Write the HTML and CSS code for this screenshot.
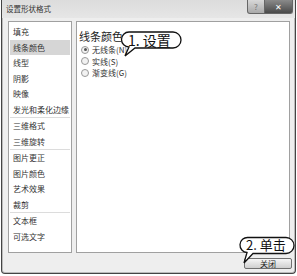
FILE: index.html
```html
<!DOCTYPE html>
<html lang="zh-CN">
<head>
    <meta charset="UTF-8">
    <title>设置形状格式</title>
    <link rel="stylesheet" href="styles.css">
</head>
<body>
    <div class="window">
        <div class="titlebar">
            <span class="title">设置形状格式</span>
            <div class="controls">
                <span class="btn-help">?</span>
                <span class="btn-close">✕</span>
            </div>
        </div>

        <div class="content">
            <ul class="nav">
                <li>填充</li>
                <li class="active">线条颜色</li>
                <li>线型</li>
                <li>阴影</li>
                <li>映像</li>
                <li>发光和柔化边缘</li>
                <li class="sep">三维格式</li>
                <li>三维旋转</li>
                <li class="sep">图片更正</li>
                <li>图片颜色</li>
                <li>艺术效果</li>
                <li>裁剪</li>
                <li class="sep">文本框</li>
                <li>可选文字</li>
            </ul>

            <div class="pane">
                <div class="pane-title">线条颜色</div>
                <label class="radio"><span class="dot on"></span>无线条(N)</label>
                <label class="radio"><span class="dot"></span>实线(S)</label>
                <label class="radio"><span class="dot"></span>渐变线(G)</label>
            </div>
        </div>

        <div class="footer">
            <button class="close-btn">关闭</button>
        </div>
    </div>

    <!-- callouts drawn over the dialog -->
    <div class="callout callout-1">
        <svg width="64" height="28" viewBox="0 0 64 28">
            <path d="M10 1 H54 A8 8 0 0 1 54 17 H16 L6 25 L10 16 A7.5 7.5 0 0 1 10 1 Z" fill="#fff" stroke="#111" stroke-width="1.3"/>
        </svg>
        <span>1. 设置</span>
    </div>
    <div class="callout callout-2">
        <svg width="58" height="30" viewBox="0 0 58 30">
            <path d="M10 1.5 H48 A8 8 0 0 1 48 17.5 H15 L6 27 L9 16.5 A7.5 7.5 0 0 1 10 1.5 Z" fill="#fff" stroke="#111" stroke-width="1.3"/>
        </svg>
        <span>2. 单击</span>
    </div>
</body>
</html>
```

FILE: styles.css
```css
body {
    margin: 0;
    width: 297px;
    height: 276px;
    background: #fff;
    font-family: "Noto Sans CJK SC", "Liberation Sans", sans-serif;
    color: #222;
    position: relative;
    overflow: hidden;
}

.window {
    position: absolute;
    top: 0;
    left: 1px;
    right: 1px;
    bottom: 2px;
    background: #eeeeee;
    border: 1px solid #444;
    border-top: none;
    border-radius: 0 0 4px 4px;
    box-shadow: inset 1px 0 0 #bbb, inset -1px 0 0 #bbb, inset 0 -1px 0 #bbb;
    display: flex;
    flex-direction: column;
}

.titlebar {
    height: 18px;
    display: flex;
    justify-content: space-between;
    align-items: flex-start;
    background: linear-gradient(#dcdcdc, #e6e6e6);
}

.title {
    font-size: 7.5px;
    line-height: 18px;
    padding-left: 4px;
    color: #333;
}

.controls {
    display: flex;
    margin-right: 2px;
}

.btn-help,
.btn-close {
    height: 13px;
    line-height: 13px;
    font-size: 8px;
    text-align: center;
    color: #fff;
    border: 1px solid #666;
    border-top: none;
}

.btn-help {
    width: 16px;
    background: linear-gradient(#d8d8d8, #aaa);
    color: #777;
    border-radius: 0 0 0 3px;
}

.btn-close {
    width: 27px;
    background: linear-gradient(#8a8a8a, #4a4a4a);
    border-left: none;
    border-radius: 0 0 3px 0;
}

.content {
    flex: 1;
    display: flex;
    gap: 4px;
    padding: 3px 5px 0 6px;
}

.nav {
    list-style: none;
    margin: 0;
    width: 60px;
    padding: 2px 1px;
    background: #fff;
    border: 1px solid #a0a0a0;
}

.nav li {
    height: 15.5px;
    line-height: 15.5px;
    font-size: 8px;
    padding-left: 3px;
    white-space: nowrap;
    color: #333;
}

.nav li.active {
    background: #d6d6d6;
}

.nav li.sep {
    border-top: 1px solid #dcdcdc;
}

.pane {
    flex: 1;
    background: #fff;
    border: 1px solid #a0a0a0;
    padding: 7px 2px;
}

.pane-title {
    font-size: 11px;
    line-height: 14px;
    margin-bottom: 1px;
    color: #222;
}

.radio {
    display: flex;
    align-items: center;
    gap: 3px;
    font-size: 8px;
    height: 11.5px;
    padding-left: 2px;
    color: #333;
}

.dot {
    width: 6px;
    height: 6px;
    border-radius: 50%;
    border: 1px solid #999;
    background: #f2f2f2;
    position: relative;
}

.dot.on::after {
    content: '';
    position: absolute;
    left: 1.5px;
    top: 1.5px;
    width: 3px;
    height: 3px;
    border-radius: 50%;
    background: #555;
}

.footer {
    height: 20px;
    display: flex;
    justify-content: flex-end;
    align-items: center;
    padding-right: 3px;
}

.close-btn {
    width: 48px;
    height: 11px;
    padding: 0;
    font-family: inherit;
    font-size: 8px;
    line-height: 9px;
    color: #222;
    background: linear-gradient(#f6f6f6, #cfcfcf);
    border: 1px solid #707070;
    border-radius: 2px;
}

.callout {
    position: absolute;
}

.callout svg {
    display: block;
}

.callout span {
    position: absolute;
    font-size: 13px;
    line-height: 16px;
    color: #111;
    white-space: nowrap;
}

.callout-1 {
    left: 119px;
    top: 31px;
}

.callout-1 span {
    left: 9px;
    top: 1px;
    font-size: 14px;
}

.callout-2 {
    left: 238px;
    top: 236px;
}

.callout-2 span {
    left: 8px;
    top: 1px;
}
```
